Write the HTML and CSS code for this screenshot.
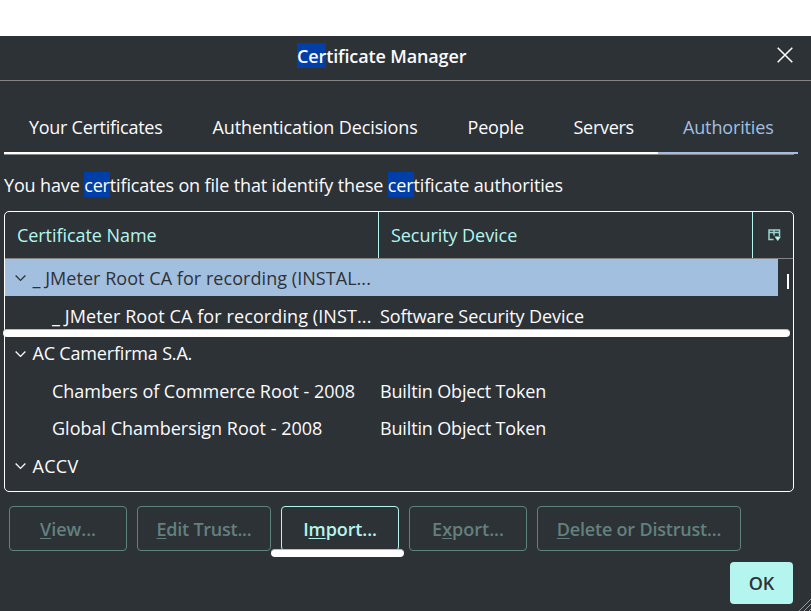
FILE: index.html
```html
<!DOCTYPE html>
<html lang="en">
<head>
<meta charset="utf-8">
<title>Certificate Manager</title>
<link rel="stylesheet" href="styles.css">
</head>
<body>
<div class="dialog">
  <header class="titlebar">
    <h1 class="title"><mark>Cer</mark>tificate Manager</h1>
    <svg class="close" viewBox="0 0 16 16"><path d="M.7.7l14.6 14.6M15.3.7L.7 15.3"/></svg>
  </header>
  <nav class="tabs">
    <div class="tab tab-yours">Your Certificates</div>
    <div class="tab tab-auth">Authentication Decisions</div>
    <div class="tab tab-people">People</div>
    <div class="tab tab-servers">Servers</div>
    <div class="tab tab-authorities">Authorities</div>
  </nav>
  <p class="intro">You have <mark>cer</mark>tificates on file that identify these <mark>cer</mark>tificate authorities</p>
  <section class="tree">
    <div class="tree-head">
      <div class="col">Certificate Name</div>
      <div class="col">Security Device</div>
      <div class="picker"><svg viewBox="0 0 13 12"><path d="M11.500 7V1H1v9.500h4.500M1 3.500h11M6 1v5.500" fill="none" stroke="#9ad3cd" stroke-width="1.500"/><path d="M6.500 7.500H13L9.750 12z" fill="#b5f5ef"/></svg></div>
    </div>
    <div class="rows">
      <div class="row group selected"><svg class="twisty" viewBox="0 0 10 6"><path d="M.5.5L5 5 9.500.5"/></svg><span class="root-name">_ JMeter Root CA for recording (INSTAL...</span></div>
      <div class="row leaf"><span class="cell child-name">_ JMeter Root CA for recording (INST...</span><span class="token-soft">Software Security Device</span></div>
      <div class="row group"><svg class="twisty" viewBox="0 0 10 6"><path d="M.5.5L5 5 9.500.5"/></svg><span class="camerfirma">AC Camerfirma S.A.</span></div>
      <div class="row leaf"><span class="cell chambers">Chambers of Commerce Root - 2008</span><span class="token">Builtin Object Token</span></div>
      <div class="row leaf"><span class="cell">Global Chambersign Root - 2008</span><span class="token">Builtin Object Token</span></div>
      <div class="row group"><svg class="twisty" viewBox="0 0 10 6"><path d="M.5.5L5 5 9.500.5"/></svg><span class="accv">ACCV</span></div>
      <div class="thumb"></div>
      <div class="stroke stroke-row"></div>
    </div>
  </section>
  <div class="actions">
    <button class="btn view" disabled><u>V</u>iew...</button>
    <button class="btn edit" disabled><u>E</u>dit Trust...</button>
    <button class="btn import">I<u>m</u>port...</button>
    <button class="btn export" disabled>E<u>x</u>port...</button>
    <button class="btn delete" disabled><u>D</u>elete or Distrust...</button>
    <div class="stroke stroke-import"></div>
  </div>
  <footer class="footer"><button class="ok">OK</button></footer>
  <svg class="grip" viewBox="0 0 12 12"><path d="M0 12L12 0M5 12l7-7M10 12l2-2"/></svg>
</div>
</body>
</html>
```
FILE: styles.css
```css
* { box-sizing: border-box; }
body {
  margin: 0;
  padding-top: 36px;
  height: 611px;
  overflow: hidden;
  background: #fff;
  font: 18px/25px "Open Sans", "Noto Sans", sans-serif;
  color: #fbfbfe;
  white-space: nowrap;
}
.dialog { position: relative; height: 575px; background: #2d3236; }
mark { display: inline-block; height: 24px; vertical-align: top; color: inherit; background: #003eaa; box-shadow: 0 -1px #003eaa; }
.titlebar { display: flex; align-items: center; justify-content: flex-end; height: 45px; padding-right: 18px; border-bottom: 1px solid #858585; }
.title { flex: 1; margin: 0 0 3px 297px; font-size: 18px; font-weight: 600; line-height: 25px; letter-spacing: -.13px; }
.close { width: 16px; height: 16px; margin-bottom: 6px; fill: none; stroke: #fff; stroke-width: 1.5; }
.tabs { display: flex; height: 74px; margin: 0 13px 0 4px; padding-top: 21px; background: linear-gradient(#858585, #858585) 0 100% / 790px 1px no-repeat; }
.tab { height: 52px; padding: 13px 0 0 25px; border-bottom: 2px solid #fff; }
.tab-yours { width: 183.5px; letter-spacing: -.27px; }
.tab-auth { width: 255px; letter-spacing: -.12px; }
.tab-people { width: 106px; letter-spacing: -.18px; }
.tab-servers { width: 109.5px; letter-spacing: -.3px; }
.tab-authorities { width: 140px; letter-spacing: -.15px; color: #a2bfe0; border-color: #a2bfe0; }
.intro { height: 25px; margin: 18px 0 13px 4px; letter-spacing: -.14px; }
.tree { width: 790px; height: 281px; margin-left: 4px; border: 1px solid #fff; border-radius: 5px; }
.tree-head { display: flex; height: 47px; border-bottom: 1px solid #858585; color: #b5f5ef; }
.col { width: 374px; padding: 11px 0 0 12px; border-right: 1px solid #b5f5ef; letter-spacing: -.06px; }
.picker { padding: 17px 0 0 15px; }
.picker svg { display: block; width: 13px; height: 12px; }
.rows { position: relative; }
.row { display: flex; align-items: center; width: 773px; height: 37.5px; padding-top: 2px; }
.selected { height: 37px; margin-bottom: .5px; background: #a2bfe0; color: #2d3236; }
.group { padding-left: 10px; }
.leaf { padding-left: 47px; }
.cell { width: 328px; }
.twisty { width: 11px; height: 6.500px; margin-right: 6.5px; fill: none; stroke: currentColor; stroke-width: 1.2; }
.root-name { letter-spacing: .05px; }
.child-name { letter-spacing: .1px; }
.token-soft { letter-spacing: -.1px; }
.token { letter-spacing: -.15px; }
.camerfirma { letter-spacing: -.18px; }
.chambers { letter-spacing: -.04px; }
.accv { letter-spacing: .3px; }
.thumb { position: absolute; left: 782px; top: 15px; width: 2px; height: 15px; background: #fff; }
.stroke { position: absolute; height: 8px; border-radius: 4px; background: #fff; border-top: 1px solid #b9bbbc; }
.stroke-row { left: -2px; top: 70px; width: 787px; }
.actions { position: relative; display: flex; gap: 10px; margin: 14px 0 0 9px; }
.btn { height: 45px; padding: 2px 0 0; border: 1px solid #5f827f; border-radius: 4px; background: none; color: #63807e; font: 600 18px/25px "Open Sans", "Noto Sans", sans-serif; }
.view, .import, .export { width: 118px; }
.edit { width: 134px; letter-spacing: -.25px; }
.delete { width: 204px; letter-spacing: -.2px; }
.import { color: #b5f5ef; border-color: #b5f5ef; letter-spacing: -.1px; }
.stroke-import { left: 262px; top: 43px; width: 133px; }
u { text-underline-offset: 2px; text-decoration-thickness: 1px; text-decoration-skip-ink: none; }
.footer { display: flex; justify-content: flex-end; margin: 11px 18px 0 0; }
.ok { width: 63px; height: 42px; padding: 1px 0 0; border: 0; border-radius: 4px; background: #b5f5ef; color: #2d3236; font: 600 18px/25px "Open Sans", "Noto Sans", sans-serif; }
.grip { position: absolute; right: 0; bottom: 0; width: 12px; height: 12px; stroke: #9a9c9e; stroke-width: 1; }
```
